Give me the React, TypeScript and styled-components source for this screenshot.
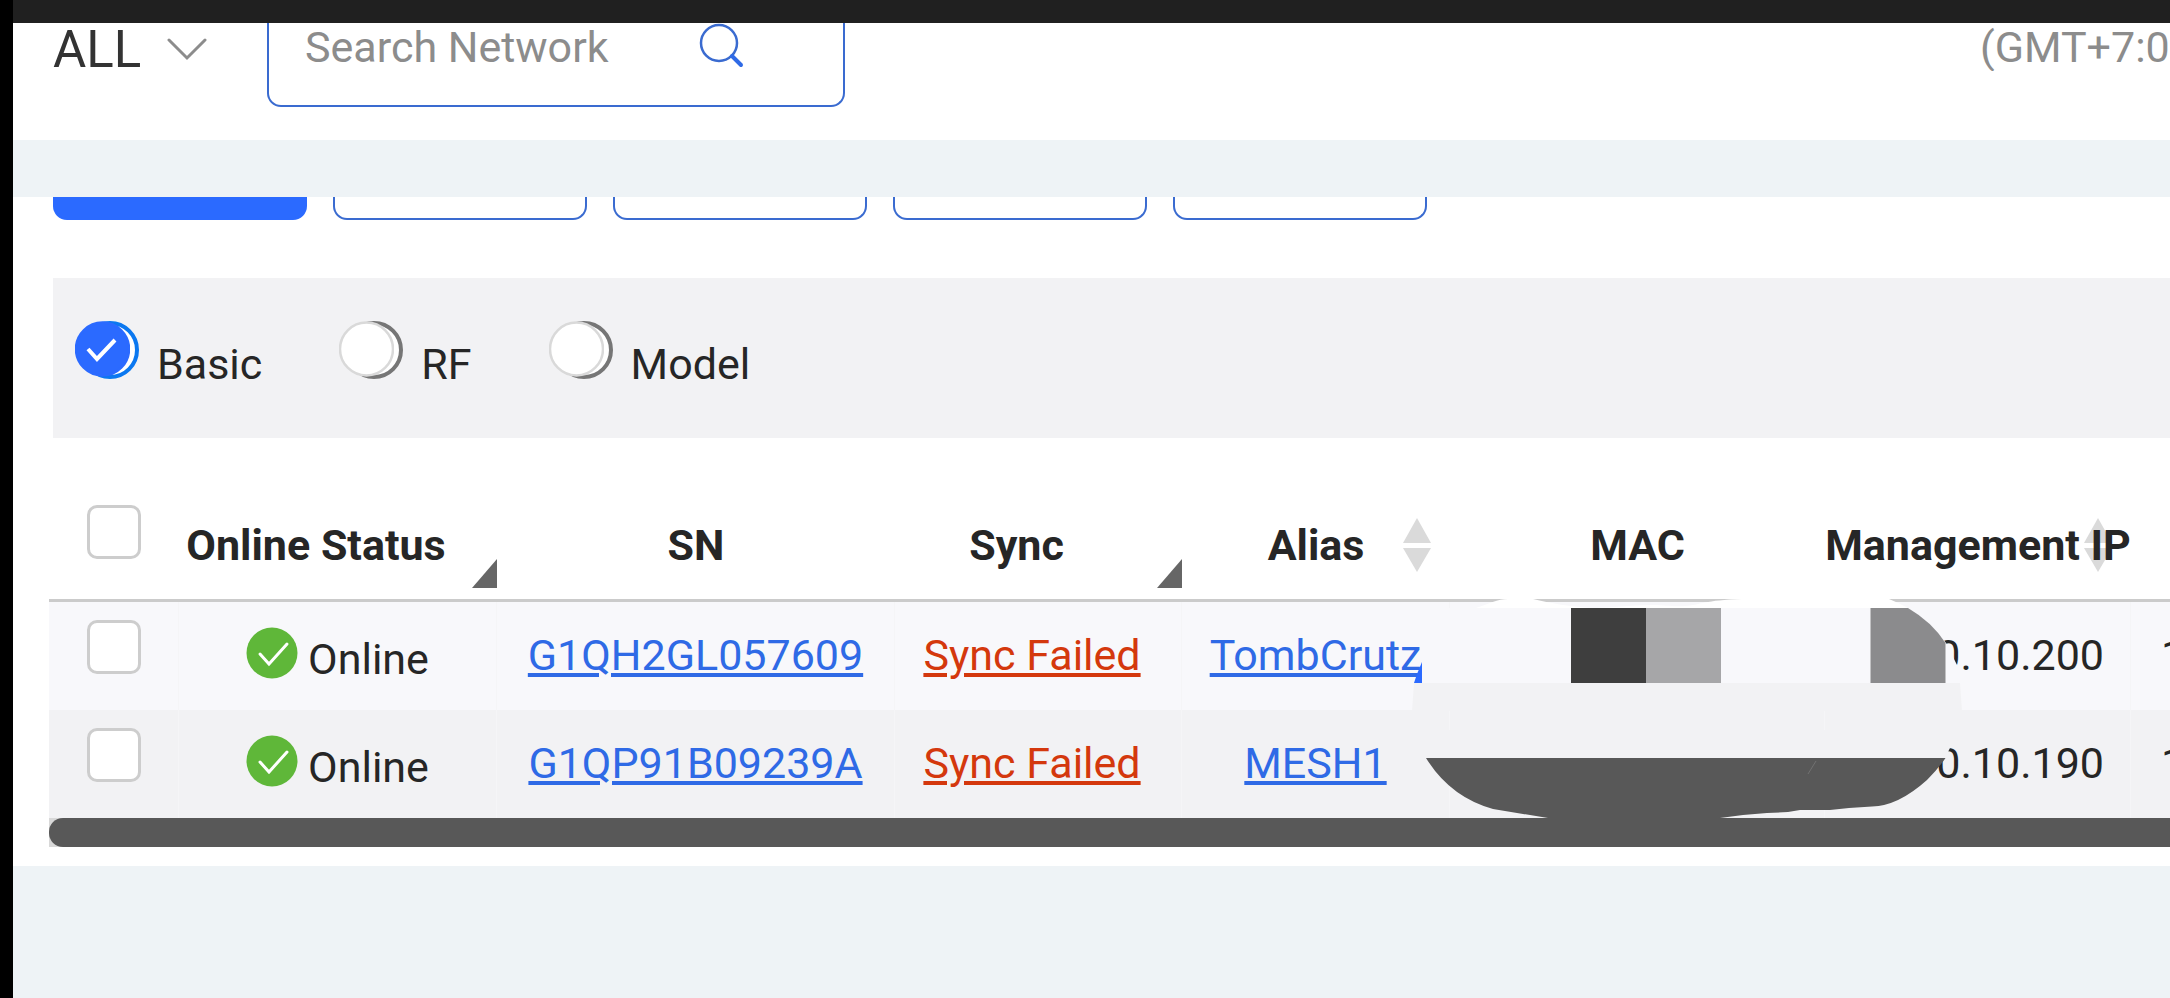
import React from "react";
import styled, { createGlobalStyle } from "styled-components";

const GlobalStyle = createGlobalStyle`
  *, *::before, *::after { box-sizing: border-box; }
  body {
    margin: 0;
    background: #eef3f6;
    color: #262626;
    font-family: Roboto, "Liberation Sans", sans-serif;
    font-size: 43px;
    line-height: 48px;
  }
  button, input, select { font: inherit; margin: 0; }
`;

const Page = styled.div`
  display: flex;
  min-height: 100vh;
  overflow: hidden;
`;

const Rail = styled.div`
  flex: 0 0 13px;
  background: #000;
`;

const Content = styled.div`
  flex: 1;
  min-width: 0;
`;

const StatusBar = styled.div`
  height: 23px;
  background: #202020;
`;

const Header = styled.header`
  display: flex;
  align-items: flex-start;
  height: 117px;
  padding-left: 40px;
  overflow: hidden;
  background: #fff;
`;

const ScopePicker = styled.label`
  display: flex;
  align-items: center;
  gap: 14px;
  width: 214px;
  height: 54px;
`;

const ScopeSelect = styled.select`
  appearance: none;
  width: 100px;
  height: 54px;
  padding: 0;
  border: 0;
  background: transparent;
  color: #333;
  font-size: 51px;
  line-height: 54px;
`;

const SearchBox = styled.div`
  display: flex;
  align-items: flex-start;
  width: 578px;
  height: 84px;
  padding-left: 36px;
  border: solid #3a6bd0;
  border-width: 0 2px 2px;
  border-radius: 0 0 14px 14px;
`;

const SearchInput = styled.input`
  width: 393px;
  height: 48px;
  padding: 0;
  border: 0;
  outline: 0;
  background: transparent;
  &::placeholder { color: #8c8c8c; opacity: 1; }
`;

const SearchButton = styled.button`
  display: flex;
  height: 48px;
  padding: 0;
  border: 0;
  background: transparent;
`;

const TimeZone = styled.span`
  flex: 0 0 190px;
  margin-left: auto;
  overflow: hidden;
  color: #8c8c8c;
  white-space: nowrap;
`;

const Panel = styled.main`
  margin-top: 57px;
  padding-bottom: 19px;
  background: #fff;
`;

const Tabs = styled.nav`
  display: flex;
  gap: 26px;
  padding-left: 40px;
`;

const Tab = styled.button<{ $active?: boolean }>`
  width: 254px;
  height: 23px;
  border: solid ${(p) => (p.$active ? "#2b6aff" : "#3a6bd0")};
  border-width: 0 2px 2px;
  border-radius: 0 0 14px 14px;
  background: ${(p) => (p.$active ? "#2b6aff" : "#fff")};
`;

const FilterBar = styled.div`
  display: flex;
  gap: 77px;
  height: 160px;
  margin: 58px 0 53px 40px;
  padding: 43px 0 0 22px;
  background: #f2f2f4;
`;

const Option = styled.label`
  display: flex;
  align-items: baseline;
  gap: 18px;
  height: 72px;
`;

const RadioMark = styled.span`
  position: relative;
  width: 64px;
  height: 58px;
`;

const Radio = styled.input`
  appearance: none;
  position: absolute;
  top: 0;
  right: 0;
  width: 58px;
  height: 58px;
  border: 4px solid #767676;
  border-radius: 50%;
  background: #fff;
  &:checked { border-color: #0b78f0; }
`;

const RadioFace = styled.svg`
  position: absolute;
  top: 0;
  left: 0;
  pointer-events: none;
`;

const TableArea = styled.div`
  position: relative;
  margin-left: 36px;
  overflow: hidden;
`;

const Table = styled.table`
  table-layout: fixed;
  width: 2382px;
  border-spacing: 0;
`;

const HeadCell = styled.th<{ $filter?: boolean }>`
  position: relative;
  height: 111px;
  padding: 0 ${(p) => (p.$filter ? "44px" : "0")} 0 0;
  border-bottom: 3px solid #cbcbcb;
  font-weight: 700;
  white-space: nowrap;
`;

const HeadText = styled.span`
  position: relative;
`;

const Cell = styled.td<{ $align?: string; $left?: number; $right?: number }>`
  height: 108px;
  padding: 0 ${(p) => p.$right ?? 0}px 2px ${(p) => p.$left ?? 0}px;
  border-right: 1px solid #f5f5f7;
  text-align: ${(p) => p.$align ?? "center"};
  white-space: nowrap;
`;

const Row = styled.tr<{ $shade?: boolean }>`
  background: ${(p) => (p.$shade ? "#f2f2f4" : "#f8f8fb")};
`;

const Tick = styled.input<{ $raise: number }>`
  appearance: none;
  display: block;
  width: 54px;
  height: 54px;
  margin: 0 auto ${(p) => p.$raise}px;
  border: 3px solid #cdcdcd;
  border-radius: 10px;
  background: #fff;
`;

const Status = styled.div`
  display: flex;
  align-items: center;
  justify-content: center;
  gap: 10px;
`;

const StatusIcon = styled.svg`
  margin-bottom: 5px;
`;

const StatusText = styled.span`
  padding-top: 8px;
`;

const Link = styled.a<{ $danger?: boolean }>`
  color: ${(p) => (p.$danger ? "#d4380d" : "#2f6ae6")};
  text-decoration-line: underline;
  text-decoration-thickness: 4px;
  text-underline-offset: 3px;
`;

const FilterCorner = styled.svg`
  position: absolute;
  right: 0;
  bottom: 11px;
`;

const SortIcon = styled.svg`
  position: absolute;
  top: 27px;
  right: 18px;
`;

const Redaction = styled.svg`
  position: absolute;
  top: 108px;
  left: 1363px;
  pointer-events: none;
`;

const ScrollTrack = styled.div`
  height: 29px;
  margin-left: 36px;
  background: #d8d8d8;
`;

const ScrollThumb = styled.div`
  height: 29px;
  border-radius: 14px 0 0 14px;
  background: #585858;
`;

const columnWidths = [130, 318, 398, 287, 268, 375, 306, 300];

const options = ["Basic", "RF", "Model"];

const devices = [
  { sn: "G1QH2GL057609", sync: "Sync Failed", alias: "TombCrutz", ip: "0.10.200" },
  { sn: "G1QP91B09239A", sync: "Sync Failed", alias: "MESH1", ip: "0.10.190" },
];

const Corner = () => (
  <FilterCorner width="25" height="29" viewBox="0 0 25 29" aria-hidden="true">
    <path d="M25 0V29H0Z" fill="#666" />
  </FilterCorner>
);

const Sort = () => (
  <SortIcon width="30" height="54" viewBox="0 0 30 54" aria-hidden="true">
    <path d="M15 0L29 25H1ZM1 30H29L15 54Z" fill="#dadada" />
  </SortIcon>
);

/* Opaque strokes covering the MAC column; coordinates start at the header rule. */
const MacRedaction = () => (
  <Redaction width="560" height="219" viewBox="1412 599 560 219" aria-hidden="true">
    <path
      d="M1476 608C1488 604 1498 599 1508 599H1533C1550 603 1570 607 1595 608C1612 608 1630 605 1650 605S1670 607 1685 606S1705 600 1742 599H1889Q1899 603 1908 608Z"
      fill="#fff"
    />
    <path d="M1422 608H1908Q1932 622 1946 643L1957 665V683H1422Z" fill="#f8f8fb" />
    <path d="M1571 608H1646V683H1571Z" fill="#3e3e3e" />
    <path d="M1646 608H1721V683H1646Z" fill="#a6a6a8" />
    <path d="M1870.500 608H1908Q1932 622 1945.500 643V683H1870.500Z" fill="#8b8b8d" />
    <path d="M1422 662V683H1414L1417 674Z" fill="#2b6aff" />
    <path d="M1414 683H1960L1962 711H1412Z" fill="#f2f2f4" />
    <path d="M1426 730H1950V748L1945 758H1426Z" fill="#f2f2f4" />
    <path
      d="M1426 758H1945.500Q1938 769 1927 780Q1898 806 1872 806.500L1849 808L1830 810H1800L1788 812L1767 813L1743 815L1720 818H1548L1493 809Q1450 797 1426 758Z"
      fill="#585858"
    />
    <path d="M1816 761L1808 774" stroke="#717171" strokeWidth="1" />
  </Redaction>
);

export default function App() {
  return (
    <>
      <GlobalStyle />
      <Page>
        <Rail />
        <Content>
          <StatusBar />
          <Header>
            <ScopePicker>
              <ScopeSelect aria-label="Scope">
                <option>ALL</option>
              </ScopeSelect>
              <svg width="40" height="24" viewBox="0 0 40 24" fill="none" aria-hidden="true">
                <path d="M2 2L20 20L38 2" stroke="#8c8c8c" strokeWidth="3" strokeLinecap="round" />
              </svg>
            </ScopePicker>
            <SearchBox>
              <SearchInput type="text" placeholder="Search Network" aria-label="Search Network" />
              <SearchButton type="button" aria-label="Search">
                <svg width="48" height="48" viewBox="0 0 48 48" fill="none" aria-hidden="true">
                  <circle cx="21" cy="20" r="18" stroke="#3a6bd0" strokeWidth="2.500" />
                  <path d="M34 33L43 42" stroke="#2f6ae6" strokeWidth="4" strokeLinecap="round" />
                </svg>
              </SearchButton>
            </SearchBox>
            <TimeZone>(GMT+7:0</TimeZone>
          </Header>
          <Panel>
            <Tabs>
              {[0, 1, 2, 3, 4].map((i) => (
                <Tab key={i} type="button" $active={i === 0} aria-label={`Tab ${i + 1}`} />
              ))}
            </Tabs>
            <FilterBar>
              {options.map((name, i) => (
                <Option key={name}>
                  <RadioMark>
                    <Radio type="radio" name="view" defaultChecked={i === 0} />
                    <RadioFace width="55" height="56" viewBox="0 0 55 56" fill="none" aria-hidden="true">
                      <circle
                        cx="27.500"
                        cy="28"
                        r="26.500"
                        fill={i === 0 ? "#2b6aff" : "#fff"}
                        stroke={i === 0 ? "#2b6aff" : "#d9d9d9"}
                        strokeWidth="2.500"
                      />
                      {i === 0 && <path d="M13 28L22 38L40 19" stroke="#fff" strokeWidth="4" />}
                    </RadioFace>
                  </RadioMark>
                  {name}
                </Option>
              ))}
            </FilterBar>
            <TableArea>
              <Table>
                <colgroup>
                  {columnWidths.map((w, i) => (
                    <col key={i} width={w} />
                  ))}
                </colgroup>
                <thead>
                  <tr>
                    <HeadCell>
                      <Tick type="checkbox" $raise={26} aria-label="Select all" />
                    </HeadCell>
                    <HeadCell $filter>
                      Online Status
                      <Corner />
                    </HeadCell>
                    <HeadCell>SN</HeadCell>
                    <HeadCell $filter>
                      Sync
                      <Corner />
                    </HeadCell>
                    <HeadCell>
                      Alias
                      <Sort />
                    </HeadCell>
                    <HeadCell>MAC</HeadCell>
                    <HeadCell>
                      <Sort />
                      <HeadText>Management IP</HeadText>
                    </HeadCell>
                    <HeadCell />
                  </tr>
                </thead>
                <tbody>
                  {devices.map((d, i) => (
                    <Row key={d.sn} $shade={i % 2 === 1}>
                      <Cell>
                        <Tick type="checkbox" $raise={16} aria-label={`Select ${d.sn}`} />
                      </Cell>
                      <Cell>
                        <Status>
                          <StatusIcon width="52" height="52" viewBox="0 0 52 52" fill="none" aria-hidden="true">
                            <circle cx="26" cy="26" r="25.500" fill="#5fb739" />
                            <path
                              d="M14 27L23 37L41 17"
                              stroke="#fff"
                              strokeWidth="3"
                              strokeLinecap="round"
                            />
                          </StatusIcon>
                          <StatusText>Online</StatusText>
                        </Status>
                      </Cell>
                      <Cell>
                        <Link href="#">{d.sn}</Link>
                      </Cell>
                      <Cell $right={12}>
                        <Link href="#" $danger>
                          {d.sync}
                        </Link>
                      </Cell>
                      <Cell>
                        <Link href="#">{d.alias}</Link>
                      </Cell>
                      <Cell />
                      <Cell $align="right" $right={26}>
                        {d.ip}
                      </Cell>
                      <Cell $align="left" $left={30}>
                        1
                      </Cell>
                    </Row>
                  ))}
                </tbody>
              </Table>
              <MacRedaction />
            </TableArea>
            <ScrollTrack>
              <ScrollThumb />
            </ScrollTrack>
          </Panel>
        </Content>
      </Page>
    </>
  );
}
